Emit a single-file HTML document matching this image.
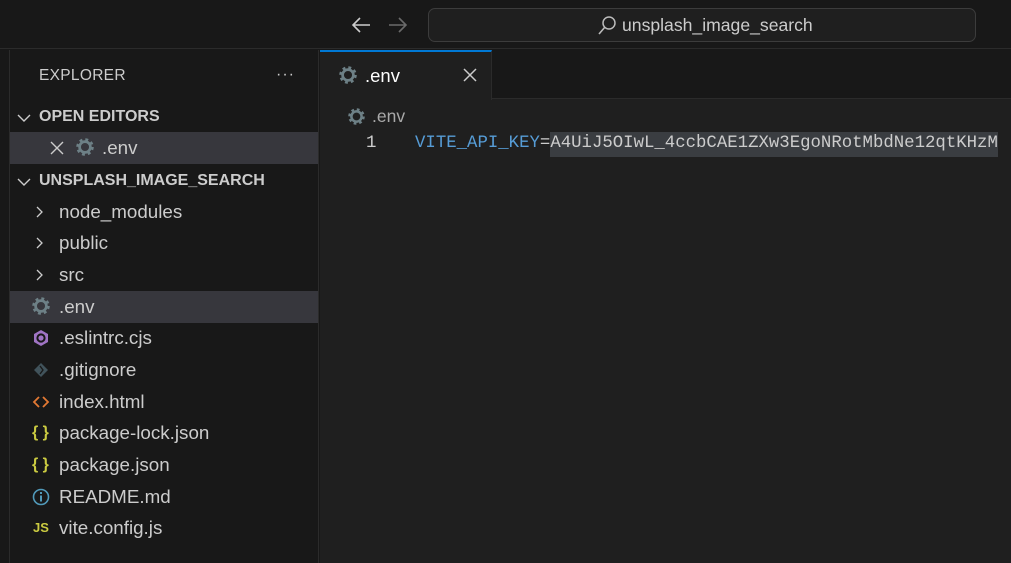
<!DOCTYPE html>
<html><head><meta charset="utf-8"><style>
*{margin:0;padding:0;box-sizing:border-box}
body{width:1011px;height:563px;background:#181818;overflow:hidden;position:relative;font-family:"Liberation Sans",sans-serif;color:#cccccc}
.abs{position:absolute}
.row{position:absolute;left:10px;width:308px;height:32px;font-size:18.8px;line-height:32px;color:#cccccc;white-space:nowrap}
.row .t{position:absolute;left:49px}
.row .i{position:absolute;left:22px;top:7px;width:18px;height:18px}
.chev{position:absolute;left:25px;top:10px;width:9px;height:12px}
</style></head><body>
<svg width="0" height="0" style="position:absolute"><defs>
<symbol id="gear" viewBox="0 0 20 20"><circle cx="10" cy="10" r="6" fill="none" stroke="#6d8086" stroke-width="3"/><circle cx="10" cy="10" r="8" fill="none" stroke="#6d8086" stroke-width="3.5" stroke-dasharray="3.1 3.2"/></symbol>
</defs></svg>
<div class="abs" style="left:0;top:0;width:1011px;height:49px;background:#181818;border-bottom:1px solid #2b2b2b"></div>
<svg class="abs" style="left:350px;top:15px" width="22" height="20" viewBox="0 0 22 20"><path d="M20 10H3M10 3L3 10L10 17" fill="none" stroke="#cccccc" stroke-width="1.6"/></svg>
<svg class="abs" style="left:387px;top:15px" width="22" height="20" viewBox="0 0 22 20"><path d="M2 10H19M12 3L19 10L12 17" fill="none" stroke="#6a6a6a" stroke-width="1.6"/></svg>
<div class="abs" style="left:428px;top:8px;width:548px;height:34px;border:1px solid #3c3c3c;border-radius:7px;background:#1f1f1f"></div>
<svg class="abs" style="left:596px;top:14px" width="22" height="22" viewBox="0 0 22 22"><circle cx="13" cy="9" r="6" fill="none" stroke="#bbbbbb" stroke-width="1.5"/><path d="M9 13L3 20" stroke="#bbbbbb" stroke-width="1.6"/></svg>
<div class="abs" style="left:622px;top:15px;font-size:17.6px;color:#cccccc">unsplash_image_search</div>
<div class="abs" style="left:0;top:50px;width:10px;height:513px;background:#181818;border-right:1px solid #2b2b2b"></div>
<div class="abs" style="left:10px;top:50px;width:309px;height:513px;background:#181818;border-right:1px solid #2b2b2b"></div>
<div class="abs" style="left:39px;top:67px;font-size:15.5px;color:#cccccc;letter-spacing:0.3px">EXPLORER</div>
<div class="abs" style="left:276px;top:66px;font-size:16px;color:#cccccc;letter-spacing:1px">···</div>
<svg class="abs" style="left:17px;top:113px" width="14" height="10" viewBox="0 0 14 10"><path d="M1 2L7 8L13 2" fill="none" stroke="#cccccc" stroke-width="1.4"/></svg>
<div class="abs" style="left:39px;top:108px;font-size:16px;font-weight:bold;color:#cccccc">OPEN EDITORS</div>
<div class="row" style="top:132px;background:#37373d"><svg class="abs" style="left:40px;top:9px" width="14" height="14" viewBox="0 0 14 14"><path d="M1 1L13 13M13 1L1 13" stroke="#cccccc" stroke-width="1.4"/></svg><svg class="abs" style="left:66px;top:6px" width="18" height="18"><use href="#gear"/></svg><span class="t" style="left:92px">.env</span></div>
<svg class="abs" style="left:17px;top:177px" width="14" height="10" viewBox="0 0 14 10"><path d="M1 2L7 8L13 2" fill="none" stroke="#cccccc" stroke-width="1.4"/></svg>
<div class="abs" style="left:39px;top:172px;font-size:16px;font-weight:bold;color:#cccccc">UNSPLASH_IMAGE_SEARCH</div>
<div class="row" style="top:196px"><svg class="chev" viewBox="0 0 9 12"><path d="M2 1L7 6L2 11" fill="none" stroke="#cccccc" stroke-width="1.3"/></svg><span class="t">node_modules</span></div>
<div class="row" style="top:227px"><svg class="chev" viewBox="0 0 9 12"><path d="M2 1L7 6L2 11" fill="none" stroke="#cccccc" stroke-width="1.3"/></svg><span class="t">public</span></div>
<div class="row" style="top:259px"><svg class="chev" viewBox="0 0 9 12"><path d="M2 1L7 6L2 11" fill="none" stroke="#cccccc" stroke-width="1.3"/></svg><span class="t">src</span></div>
<div class="row" style="top:291px;background:#37373d"><svg class="i" style="left:22px;top:6px"><use href="#gear"/></svg><span class="t">.env</span></div>
<div class="row" style="top:322px"><svg class="i" viewBox="0 0 18 18"><polygon points="9,1 16,5 16,13 9,17 2,13 2,5" fill="#a074c4"/><circle cx="9" cy="9" r="3.6" fill="none" stroke="#181818" stroke-width="2"/></svg><span class="t">.eslintrc.cjs</span></div>
<div class="row" style="top:354px"><svg class="i" viewBox="0 0 18 18"><polygon points="9,2 16,9 9,16 2,9" fill="#41535b"/><path d="M8 5L11 9L8 13" stroke="#181818" stroke-width="1.3" fill="none"/></svg><span class="t">.gitignore</span></div>
<div class="row" style="top:386px"><svg class="i" viewBox="0 0 18 18"><path d="M7 4L2 9L7 14M11 4L16 9L11 14" fill="none" stroke="#e37933" stroke-width="1.8"/></svg><span class="t">index.html</span></div>
<div class="row" style="top:417px"><span class="abs" style="left:22px;top:0;font-size:16px;color:#cbcb41;font-weight:bold">{ }</span><span class="t">package-lock.json</span></div>
<div class="row" style="top:449px"><span class="abs" style="left:22px;top:0;font-size:16px;color:#cbcb41;font-weight:bold">{ }</span><span class="t">package.json</span></div>
<div class="row" style="top:481px"><svg class="i" viewBox="0 0 18 18"><circle cx="9" cy="9" r="7.5" fill="none" stroke="#519aba" stroke-width="1.6"/><rect x="8" y="7.5" width="2" height="6" fill="#519aba"/><rect x="8" y="4" width="2" height="2" fill="#519aba"/></svg><span class="t">README.md</span></div>
<div class="row" style="top:512px"><span class="abs" style="left:23px;top:0;font-size:13px;color:#cbcb41;font-weight:bold">JS</span><span class="t">vite.config.js</span></div>
<div class="abs" style="left:320px;top:50px;width:691px;height:513px;background:#1f1f1f"></div>
<div class="abs" style="left:320px;top:50px;width:691px;height:49px;background:#181818;border-bottom:1px solid #2b2b2b"></div>
<div class="abs" style="left:320px;top:50px;width:172px;height:50px;background:#1f1f1f;border-top:2px solid #0078d4;border-right:1px solid #2b2b2b"></div>
<svg class="abs" style="left:339px;top:66px" width="18" height="18"><use href="#gear"/></svg>
<div class="abs" style="left:365px;top:65px;font-size:18.5px;color:#ffffff">.env</div>
<svg class="abs" style="left:463px;top:68px" width="14" height="14" viewBox="0 0 14 14"><path d="M1 1L13 13M13 1L1 13" stroke="#cccccc" stroke-width="1.5"/></svg>
<svg class="abs" style="left:348px;top:108px" width="17" height="17"><use href="#gear"/></svg>
<div class="abs" style="left:372px;top:106px;font-size:17.5px;color:#a9a9a9">.env</div>
<div class="abs" style="left:366px;top:134px;font-size:17.4px;font-family:'Liberation Mono',monospace;color:#cccccc">1</div>
<div class="abs" style="left:550px;top:132px;width:448px;height:25px;background:#3a3d41"></div>
<div class="abs" style="left:415px;top:134px;font-size:17.35px;font-family:'Liberation Mono',monospace;color:#cccccc;white-space:nowrap"><span style="color:#569cd6">VITE_API_KEY</span>=A4UiJ5OIwL_4ccbCAE1ZXw3EgoNRotMbdNe12qtKHzM</div>
</body></html>
